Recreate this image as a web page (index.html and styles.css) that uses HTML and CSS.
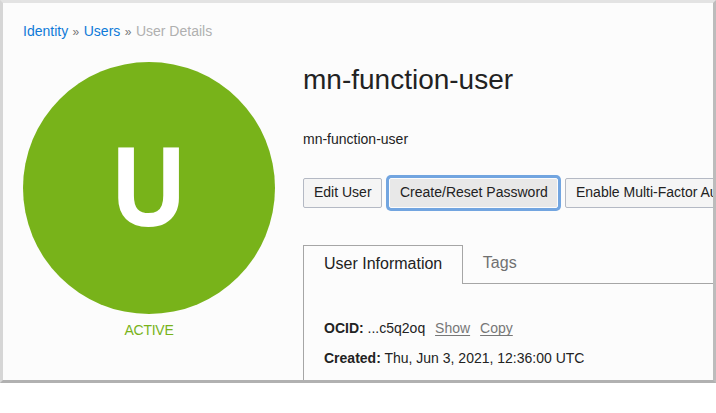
FILE: index.html
```html
<!DOCTYPE html>
<html lang="en">
<head>
<meta charset="utf-8">
<title>User Details</title>
<link rel="stylesheet" href="styles.css">
</head>
<body>
<div class="window">
  <nav class="crumbs"><a href="#">Identity</a><span class="sep">»</span><a href="#">Users</a><span class="sep">»</span><span class="current">User Details</span></nav>
  <div class="layout">
    <aside class="badge">
      <div class="circle"><span class="initial">U</span></div>
      <div class="state">ACTIVE</div>
    </aside>
    <main class="details">
      <h1>mn-function-user</h1>
      <p class="description">mn-function-user</p>
      <div class="actions">
        <button class="edit">Edit User</button>
        <button class="focused">Create/Reset Password</button>
        <button class="mfa">Enable Multi-Factor Authentication</button>
      </div>
      <div class="tabs">
        <div class="tab active"><span>User Information</span></div>
        <div class="tab"><span>Tags</span></div>
      </div>
      <div class="panel">
        <div class="row"><b>OCID:</b> ...c5q2oq <a class="show" href="#">Show</a><a class="copy" href="#">Copy</a></div>
        <div class="row"><b>Created:</b> Thu, Jun 3, 2021, 12:36:00 UTC</div>
      </div>
    </main>
  </div>
</div>
</body>
</html>
```
FILE: styles.css
```css
* { box-sizing: border-box; }
body {
  margin: 0;
  background: #fff;
  color: #222;
  font: 14px/20px "Liberation Sans", Arial, sans-serif;
}
.window {
  width: 716px;
  height: 383px;
  border: 3px solid;
  border-color: #e3e3e3 #bcbcbc #b1b1b1 #d6d6d6;
  background: #fcfcfc;
  overflow: hidden;
  padding: 18px 0 0 20px;
}
.crumbs { height: 20px; white-space: nowrap; }
.crumbs a { color: #0f7ad8; text-decoration: none; }
.sep { display: inline-block; width: 15.6px; text-align: center; font-size: 12px; color: #777; }
.current { color: #b0b0b0; }
.layout { display: flex; gap: 28px; margin-top: 21px; }
.badge { flex: 0 0 252px; text-align: center; }
.circle {
  height: 252px;
  border-radius: 50%;
  background: #78b31a;
  color: #fff;
  font-family: "Open Sans", sans-serif;
  font-size: 110px;
  font-weight: bold;
  line-height: 243px;
}
.initial { display: inline-block; transform: scaleX(0.94); }
.state { margin-top: 6px; color: #78b31a; letter-spacing: -0.25px; }
.details { flex: 0 0 600px; white-space: nowrap; }
h1 { margin: 0; font-size: 28px; font-weight: normal; line-height: 36px; }
.description { margin: 31px 0 0; }
.actions { display: flex; gap: 7px; margin-top: 29px; }
button {
  height: 30px;
  padding: 0 10px 2px;
  border: 1px solid #b4b9c4;
  border-radius: 2px;
  background: #f5f5f5;
  color: #222;
  font: inherit;
  text-align: left;
}
.edit { width: 79px; }
.focused {
  width: 169px;
  border-color: #fcfcfc;
  background: #e8e8e8;
  background-clip: padding-box;
  box-shadow: 0 0 0 3px #72a5e0;
}
.mfa { flex: none; }
.tabs { display: flex; height: 39px; margin-top: 37px; font-size: 16px; }
.tab { flex: 1; padding: 8px 20px 0 19.6px; border-bottom: 1px solid #a6a6a6; color: #707070; }
.active { flex: 0 0 160px; padding-left: 20px; border: 1px solid #a6a6a6; border-bottom: 0; color: #222; }
.panel { height: 200px; border-left: 1px solid #a6a6a6; padding: 34px 0 0 20px; }
.row { margin-bottom: 10px; }
.row a { color: #777; text-underline-offset: 2px; text-decoration-thickness: 1px; text-decoration-skip-ink: none; }
.show { margin-left: 6px; }
.copy { margin-left: 10px; }
```
